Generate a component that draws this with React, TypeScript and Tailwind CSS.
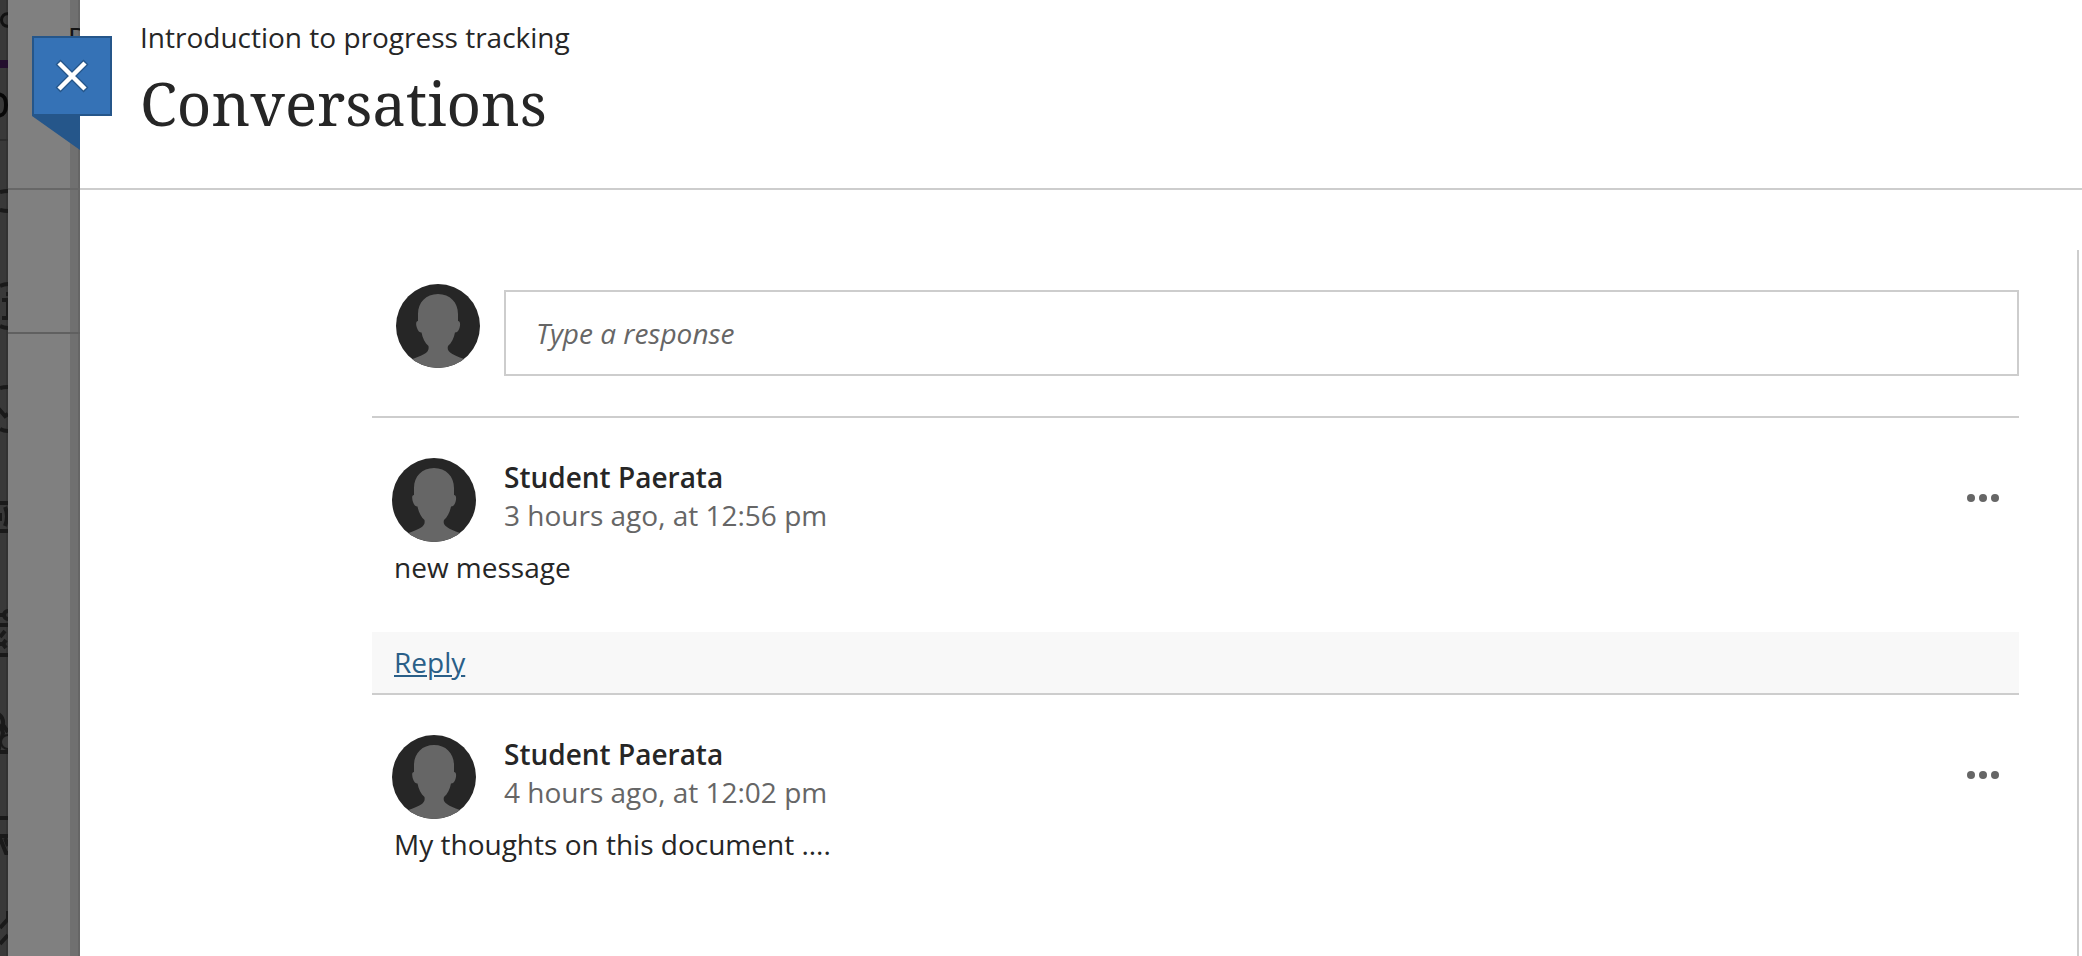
import { useState } from 'react';

const posts = [
  { id: 1, author: 'Student Paerata', time: '3 hours ago, at 12:56 pm', body: 'new message', canReply: true },
  { id: 2, author: 'Student Paerata', time: '4 hours ago, at 12:02 pm', body: 'My thoughts on this document ....', canReply: false },
];

function Avatar() {
  return (
    <svg viewBox="0 0 84 84" className="size-21 shrink-0 rounded-full" aria-hidden="true">
      <rect width="84" height="84" fill="#262626" />
      <path
        fill="#666666"
        d="M42 10C30 10 22 18.500 22 30L22 37C19.500 37 20 41 21 44C22 47 23.500 48.500 25.500 48.500C26.500 54 29 59 32.500 62C33.500 68 30 70 16.500 75V84H68V75C54 70 50.500 67 52 62C55.500 59 58 54 59 48.500C61 48.500 62.500 47 63.500 44C64.500 41 64.500 37 62 37L62 30C62 18.500 54 10 42 10Z"
      />
    </svg>
  );
}

// Edge of the base page, still visible under the overlay
function BasePageEdge() {
  return (
    <div className="w-2 shrink-0 overflow-hidden bg-[linear-gradient(to_right,#393939_6px,#323232_6px)]" aria-hidden="true">
      <svg
        width="8"
        height="956"
        viewBox="0 0 8 956"
        fill="none"
        stroke="#1a1a1a"
        strokeWidth="4"
        className="block max-w-none"
      >
        <path d="M9 14C-1 12-1 28 9 26" stroke="#111111" strokeWidth="3" />
        <path d="M0 64H8" stroke="#230f2d" strokeWidth="8" />
        <path d="M-4 94C4 94 6 98 6 105C6 112 4 116-4 116" stroke="#080808" strokeWidth="4" />
        <path d="M0 140H8" stroke="#2c2c2c" strokeWidth="2" />
        <path d="M0 192Q4 191 8 191M0 210Q4 211 8 211" />
        <path d="M0 286Q4 284 8 284M0 326Q4 328 8 328M2 300H8V318M2 318H8M6 294H8" />
        <path d="M0 388Q3 387 8 387M0 429Q3 431 8 431M-2 408L5 416L8 414" />
        <path d="M0 503H8M0 531H8M0 513V521M5 507Q9 516 5 526" />
        <path d="M0 615H3M0 625H8M0 655H8M0 637L5 631M0 644H3L6 640M3 644L6 648" />
        <circle cx="8" cy="615" r="4" />
        <path d="M-4 713Q4 716 3 725L8 732M0 752H8" />
        <path d="M-2 724Q2 728 3 733L-2 752" />
        <circle cx="8" cy="742" r="7" fill="#393939" strokeWidth="2" />
        <path d="M0 818H8M0 836H8M0 838L6 853H8M5 838L8 846" />
        <path d="M0 928L8 919M0 944L8 935M8 911V920" />
      </svg>
    </div>
  );
}

function CloseButton() {
  return (
    <div className="absolute top-9 left-8 w-20">
      <button
        type="button"
        aria-label="Close"
        className="flex size-20 items-center justify-center border-2 border-[#25568a] bg-[#3572b6]"
      >
        <svg width="36" height="36" viewBox="0 0 36 36" fill="none">
          <path d="M4 4L32 32M32 4L4 32" stroke="#25568a" strokeWidth="7" />
          <path d="M5 5L31 31M31 5L5 31" stroke="#ffffff" strokeWidth="4.5" />
        </svg>
      </button>
      <svg width="48" height="34" viewBox="0 0 48 34" className="block" aria-hidden="true">
        <path d="M0 0H48V34Z" fill="#25568a" />
      </svg>
    </div>
  );
}

function Post({ post }: { post: (typeof posts)[number] }) {
  return (
    <li>
      <article className="pt-10">
        <div className="flex items-start pr-5 pl-5">
          <Avatar />
          <div className="ml-7 flex-1">
            <h2 className="font-semibold">{post.author}</h2>
            <p className="text-[#666666]">{post.time}</p>
          </div>
          <button type="button" aria-label="More options" className="mt-6 flex h-8 items-center gap-1">
            <span className="size-2 rounded-full bg-[#666666]" />
            <span className="size-2 rounded-full bg-[#666666]" />
            <span className="size-2 rounded-full bg-[#666666]" />
          </button>
        </div>
        <p className="mt-1.5 px-[22px] pb-[46px]">{post.body}</p>
        {post.canReply && (
          <div className="border-b-2 border-[#cdcdcd] bg-[#f8f8f8] px-[22px] pt-[11px] pb-3">
            <a href="#reply" className="text-[#2a5f88] underline">
              Reply
            </a>
          </div>
        )}
      </article>
    </li>
  );
}

export default function App() {
  const [response, setResponse] = useState('');

  return (
    <div className="relative flex min-h-screen overflow-hidden bg-white font-['Open_Sans',sans-serif] text-[28px] leading-[38px] text-[#262626]">
      <BasePageEdge />

      {/* Panel underneath, dimmed */}
      <div className="flex w-[72px] shrink-0 flex-col overflow-hidden bg-[linear-gradient(to_right,#808080_62px,#707070_62px,#707070_70px,#666666_70px)]">
        <div className="h-[190px] border-b-2 border-[#676767] pt-[18px] pl-[60px] text-[#131313]">D</div>
        <div className="h-36 border-b-2 border-[#606060]" />
      </div>

      <div className="flex min-w-0 flex-1 flex-col">
        <header className="border-b-2 border-[#cdcdcd] px-[60px] pt-[18px] pb-[45px]">
          <p>Introduction to progress tracking</p>
          <h1 className="mt-[7px] font-['Noto_Serif','DejaVu_Serif_Condensed','DejaVu_Serif',serif] text-[60px] leading-[80px]">
            Conversations
          </h1>
        </header>

        <main className="mt-15 mr-[3px] flex-1 border-r-2 border-[#cdcdcd] pr-[58px] pl-[292px]">
          <form className="flex items-start border-b-2 border-[#cdcdcd] pt-[34px] pb-10 pl-6">
            <Avatar />
            <input
              type="text"
              aria-label="Type a response"
              placeholder="Type a response"
              value={response}
              onChange={(e) => setResponse(e.target.value)}
              className="mt-1.5 ml-6 h-[86px] min-w-0 flex-1 border-2 border-[#cdcdcd] px-[30px] placeholder:text-[#666666] placeholder:italic"
            />
          </form>
          <ul>
            {posts.map((post) => (
              <Post key={post.id} post={post} />
            ))}
          </ul>
        </main>
      </div>

      <CloseButton />
    </div>
  );
}
